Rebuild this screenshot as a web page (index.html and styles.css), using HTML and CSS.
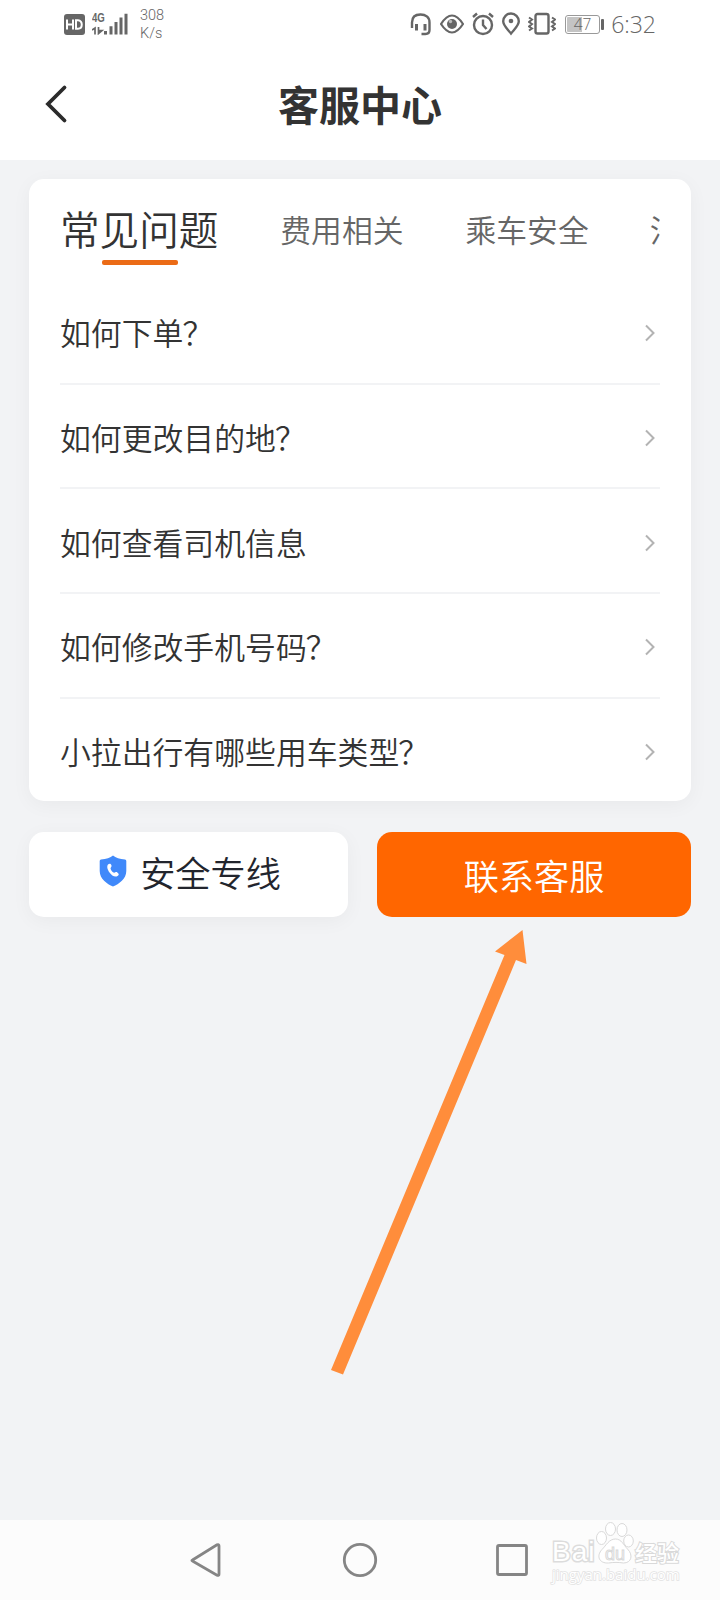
FILE: index.html
```html
<!DOCTYPE html>
<html lang="zh-CN">
<head>
<meta charset="utf-8">
<title>客服中心</title>
<link rel="stylesheet" href="styles.css">
</head>
<body>
<div class="screen">
  <div class="status">
    <svg class="hd" width="21" height="21" viewBox="0 0 21 21"><rect width="21" height="21" rx="3" fill="#666"/><path d="M3 5.500v10M9 5.500v10M3 10.500h6M12 6.300v8.400h2c5 0 5-8.400 0-8.400z" fill="none" stroke="#fff" stroke-width="2"/></svg>
    <div class="signal">
      <span class="gen">4G</span>
      <svg width="36" height="22" viewBox="0 0 36 22"><path d="M0 17l3-2v6.500M6.500 14v6.500l3.500-3H7" fill="none" stroke="#666" stroke-width="1.700"/><path d="M13.500 18v3.500M19 13.300v8.200M24 9v12.500M29 4.500v17M34 .8v20.700" stroke="#666" stroke-width="3"/></svg>
    </div>
    <div class="speed"><span>308</span><span>K/s</span></div>
    <div class="tray">
      <svg width="22" height="24" viewBox="0 0 22 24"><path d="M2 16V10.500C2 5 5.500 2.500 10.500 2.500S19.500 5 19.500 10.500V18c0 2.800-1 4-4 4h-4" fill="none" stroke="#666" stroke-width="2.400"/><path d="M6.500 12v6.500M15 12v6.500" stroke="#666" stroke-width="3"/></svg>
      <svg width="24" height="24" viewBox="0 0 24 24"><path d="M1 12q11-17 22 0q-11 17-22 0z" fill="none" stroke="#666" stroke-width="2.200"/><circle cx="12" cy="12" r="5" fill="#666"/><circle cx="10.500" cy="9.500" r="1.700" fill="#bbb"/></svg>
      <svg width="22" height="24" viewBox="0 0 22 24"><circle cx="11" cy="13" r="9" fill="none" stroke="#666" stroke-width="2.400"/><path d="M11 7.500V13l3.500 4M1 5l4-3.500M21 5l-4-3.500" fill="none" stroke="#666" stroke-width="2.400"/></svg>
      <svg width="18" height="24" viewBox="0 0 18 24"><path d="M9 21.500C5 16.500 1.200 13.500 1.200 9.300a7.800 7.800 0 0 1 15.600 0c0 4.200-3.800 7.200-7.800 12.200z" fill="none" stroke="#666" stroke-width="2.400"/><circle cx="9" cy="9" r="2.300" fill="#666"/></svg>
      <svg width="28" height="24" viewBox="0 0 28 24"><rect x="7.500" y="2" width="13" height="19.500" rx="2" fill="none" stroke="#666" stroke-width="2.400"/><path d="M1 5.500l3 2-3 2.500 3 2-3 2.500 3 2-3 2M24 5.500l3 2-3 2.500 3 2-3 2.500 3 2-3 2" fill="none" stroke="#666" stroke-width="2"/></svg>
      <div class="battery"><span>47</span></div>
      <span class="time">6:32</span>
    </div>
  </div>
  <header class="header">
    <svg class="back" width="24" height="40" viewBox="0 0 24 40"><path d="M20.500 3.500L4 20l16.500 16.500" fill="none" stroke="#2b2b2b" stroke-width="3.800" stroke-linecap="round"/></svg>
    <h1>客服中心</h1>
  </header>
  <main class="main">
    <section class="card">
      <nav class="tabs">
        <span class="tab active">常见问题</span>
        <span class="tab">费用相关</span>
        <span class="tab">乘车安全</span>
        <span class="tab next">法</span>
      </nav>
      <ul class="list">
        <li><span>如何下单<i>？</i></span><svg width="10" height="18" viewBox="0 0 10 18"><path d="M1 1.500L8.500 9 1 16.500" /></svg></li>
        <li><span>如何更改目的地<i>？</i></span><svg width="10" height="18" viewBox="0 0 10 18"><path d="M1 1.500L8.500 9 1 16.500" /></svg></li>
        <li><span>如何查看司机信息</span><svg width="10" height="18" viewBox="0 0 10 18"><path d="M1 1.500L8.500 9 1 16.500" /></svg></li>
        <li><span>如何修改手机号码<i>？</i></span><svg width="10" height="18" viewBox="0 0 10 18"><path d="M1 1.500L8.500 9 1 16.500" /></svg></li>
        <li><span>小拉出行有哪些用车类型<i>？</i></span><svg width="10" height="18" viewBox="0 0 10 18"><path d="M1 1.500L8.500 9 1 16.500" /></svg></li>
      </ul>
    </section>
    <div class="actions">
      <div class="btn safe">
        <svg width="28" height="32" viewBox="0 0 28 32"><path d="M14 .5Q18 4 26 4.500Q27.300 4.700 27.300 6V16C27.300 24 20 29 14 31.500C8 29 .7 24 .7 16V6Q.7 4.700 2 4.500Q10 4 14 .5z" fill="#4089fa"/><path d="M9 9.500c1.500-1.500 3-1 3.500 1 .4 1.600-1.300 2-.9 3.200.5 1.600 1.600 3 3 3.900 1.300.8 2.200-1.200 3.700-.2 2 1.400 1.800 2.600.2 3.700-2.600 1.500-6-.6-8-3.600-2-2.800-3-6-1.500-8z" fill="#fff"/></svg>
        <span>安全专线</span>
      </div>
      <div class="btn contact"><span>联系客服</span></div>
    </div>
  </main>
  <footer class="navbar">
    <svg width="32" height="36" viewBox="0 0 32 36"><path d="M2.500 18L27 2.800q2-.8 2 1v28.400q0 1.800-2 1L2.500 19q-1.200-.5 0-1z"/></svg>
    <svg width="36" height="36" viewBox="0 0 36 36"><circle cx="18" cy="18" r="15.700"/></svg>
    <svg width="34" height="36" viewBox="0 0 34 36"><rect x="2.500" y="3.500" width="29" height="29" rx="1.500"/></svg>
  </footer>
  <svg class="arrow" width="210" height="460" viewBox="0 0 210 460"><path d="M192.500 10L196.500 44 186 40 13 454.500 1 450 174.500 35 165 31.500z" fill="#ff8d3b"/></svg>
  <div class="watermark">
    <div class="brand"><span class="bai">Bai</span>
      <svg width="38" height="44" viewBox="0 0 38 44"><g fill="#fff" stroke="#d9d9d9"><ellipse cx="5.500" cy="17" rx="5" ry="6.500"/><ellipse cx="14.500" cy="8" rx="5" ry="6.500"/><ellipse cx="26" cy="9" rx="5" ry="6.500"/><ellipse cx="32.500" cy="20" rx="4.800" ry="6"/><path d="M19.500 18c6 0 8 6 12 10 6 6 4 14-4 14-5-.8-10-.8-15 0C3 42.500 0 35 6 28.500c4-4 7-10.500 13.500-10.500z"/></g><text x="9" y="38.500" class="du">du</text></svg>
      <span class="jy">经验</span></div>
    <div class="url">jingyan.baidu.com</div>
  </div>
</div>
</body>
</html>
```
FILE: styles.css
```css
* { box-sizing: border-box; }
body { margin: 0; font-family: "Noto Sans CJK SC", sans-serif; font-weight: 350; color: #333; }
h1, ul { margin: 0; padding: 0; }
svg { display: block; flex: none; }
.screen { position: relative; width: 720px; height: 1600px; display: flex; flex-direction: column; background: #f2f3f5; overflow: hidden; }
.status { height: 50px; background: #fff; display: flex; padding: 0 64px; color: #666; }
.hd { margin-top: 14px; }
.signal { margin: 12px 0 0 7px; width: 36px; height: 24px; display: grid; }
.signal > * { grid-area: 1 / 1; }
.signal svg { margin-top: 1px; }
.gen { font: bold 12px/12px "Liberation Sans", sans-serif; transform: scaleX(.8); transform-origin: left; height: 12px; }
.speed { margin: 7px 0 0 12px; display: flex; flex-direction: column; font: 300 14.500px/18px Roboto, sans-serif; color: #666; }
.tray { margin-left: auto; display: flex; gap: 8px; padding-top: 12px; }
.battery { width: 35px; height: 19px; margin: 3px 4px 0 1px; border: 1.500px solid #999; border-radius: 3px; background: linear-gradient(90deg, #c4c4c4 15px, #fff 15px) content-box; padding: 1px; position: relative; font: 300 15.500px/15px "Open Sans", sans-serif; text-align: center; }
.battery::after { content: ""; position: absolute; right: -5px; top: 3px; width: 3px; height: 11px; background: #666; border-radius: 1px; }
.time { font: 300 23px/26px "Open Sans", sans-serif; margin: -1px 0 0 -1px; }
.header { height: 110px; background: #fff; display: grid; align-items: center; }
.header > * { grid-area: 1 / 1; }
.back { margin: 0 0 2px 44px; }
h1 { text-align: center; font-size: 41px; line-height: 60px; padding-bottom: 4px; }
.main { flex: 1; padding: 19px 29px 0; }
.card { height: 622px; background: #fff; border-radius: 15px; padding: 0 31px; box-shadow: 0 4px 20px rgba(0,0,0,.045); }
.tabs { height: 101px; padding-top: 20px; display: flex; gap: 62px; overflow: hidden; }
.tab { flex: none; font-size: 30.800px; line-height: 60px; color: #666; }
.next { margin-left: -1px; }
.active { font-size: 39.600px; line-height: 58px; color: #333; position: relative; }
.active::after { content: ""; position: absolute; left: 42px; top: 61px; width: 76px; height: 5px; border-radius: 2px; background: #eb6b16; }
.list { list-style: none; }
.list li { height: 104.700px; display: flex; align-items: center; justify-content: space-between; padding: 4px 5px 0 0; border-bottom: 2px solid #f2f3f5; font-size: 30.850px; line-height: 46px; }
.list span { padding-bottom: 2px; }
.list i { font-style: normal; margin-left: -1px; }
.list li:last-child { border-bottom-color: transparent; }
.list path { fill: none; stroke: #b3b3b3; stroke-width: 2; }
.actions { margin-top: 31px; display: flex; gap: 29px; }
.btn { height: 85px; border-radius: 15px; display: flex; justify-content: center; align-items: center; font-size: 35.200px; line-height: 52px; }
.safe { width: 319px; background: #fff; color: #22252d; gap: 13px; padding-left: 3px; box-shadow: 0 4px 20px rgba(0,0,0,.045); }
.safe svg { margin-bottom: 8px; }
.safe span { margin-bottom: 6px; }
.contact { width: 314px; background: #ff6600; color: #fff; }
.navbar { height: 80px; background: #fcfcfc; display: flex; align-items: center; padding-left: 190px; }
.navbar svg { fill: none; stroke: #858585; stroke-width: 2.800; }
.navbar svg:nth-child(2) { margin-left: 120px; }
.navbar svg:nth-child(3) { margin-left: 117px; }
.arrow { position: absolute; left: 330px; top: 920px; }
.watermark { position: absolute; left: 552px; top: 1521px; color: #fff; -webkit-text-stroke: 1px #d9d9d9; }
.brand { display: flex; height: 44px; }
.bai { font: 28px/32px "Liberation Sans", sans-serif; margin-top: 15px; width: 44px; -webkit-text-stroke: 3px #dcdcdc; paint-order: stroke fill; letter-spacing: 1px; }
.du { font: 18px "Liberation Sans", sans-serif; fill: #fff; stroke: #d9d9d9; }
.jy { font-size: 22px; line-height: 30px; font-weight: 500; margin: 15px 0 0 1px; -webkit-text-stroke: 2px #d9d9d9; paint-order: stroke fill; }
.url { font: 15px/18px "Open Sans", sans-serif; color: #fff; -webkit-text-stroke: 1.500px #e2e2e2; paint-order: stroke fill; }
```
